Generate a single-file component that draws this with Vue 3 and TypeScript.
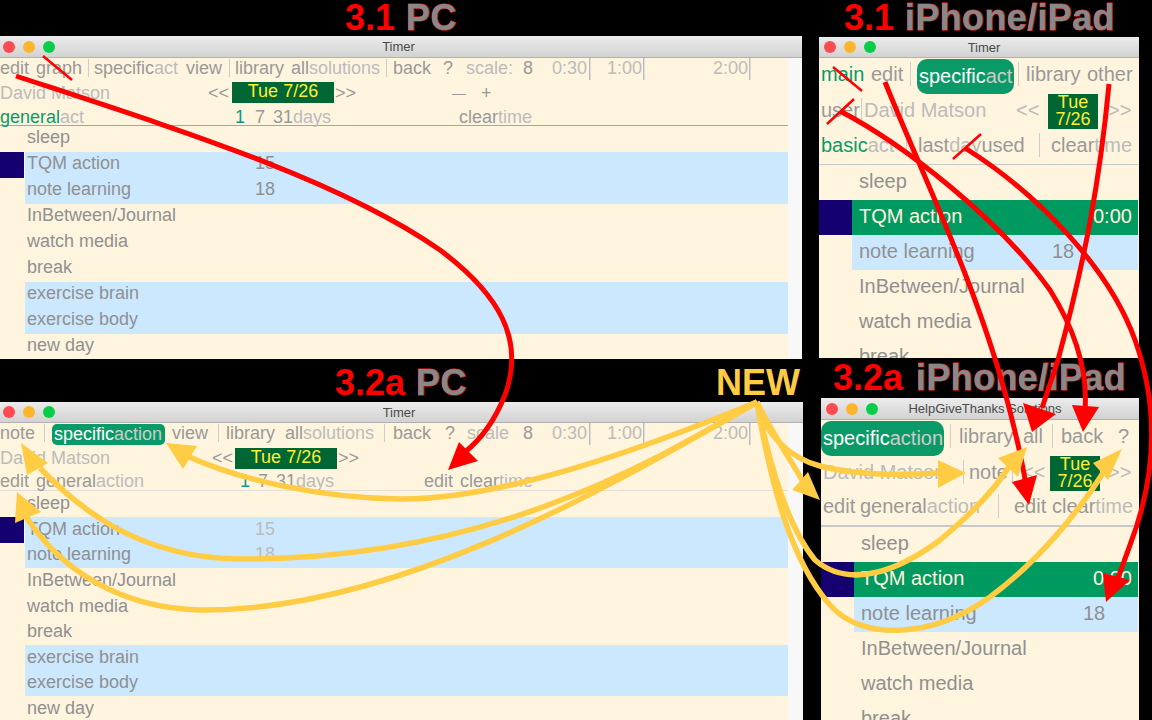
<script setup lang="ts">
type Part = [string, string]
interface Cell {
  x: number
  t?: Part[]
  kind?: "pill" | "date" | "sep" | "tick"
  w?: number
}
interface ListRow {
  label: string
  value?: string
  vx?: number
  tint?: "blue" | "green"
  cls?: string
}
interface Win {
  id: string
  title: string
  textX: number
  tool: { cls: string; cells: Cell[] }[]
  rows: ListRow[]
  strip: boolean
}

const g = (s: string): Part => ["g", s]
const d = (s: string): Part => ["d", s]
const gr = (s: string): Part => ["gr", s]

const names = ["sleep", "TQM action", "note learning", "InBetween/Journal", "watch media", "break"]
const pcRows = (dimValues: boolean): ListRow[] => [
  { label: "sleep" },
  { label: "TQM action", value: "15", vx: 255, tint: "blue", cls: dimValues ? "d" : "" },
  { label: "note learning", value: "18", vx: 255, tint: "blue", cls: dimValues ? "d" : "" },
  { label: names[3] },
  { label: names[4] },
  { label: names[5] },
  { label: "exercise brain", tint: "blue" },
  { label: "exercise body", tint: "blue" },
  { label: "new day" },
]
const phoneRows = (timeX: number, noteX: number): ListRow[] => [
  { label: "sleep" },
  { label: "TQM action", value: "0:00", vx: timeX, tint: "green" },
  { label: "note learning", value: "18", vx: noteX, tint: "blue" },
  { label: names[3] },
  { label: names[4] },
  { label: names[5] },
]

const windows: Win[] = [
  {
    id: "w1",
    title: "Timer",
    textX: 27,
    strip: true,
    rows: pcRows(false),
    tool: [
      {
        cls: "t1",
        cells: [
          { x: 0, t: [g("edit")] },
          { x: 36, t: [g("graph")] },
          { x: 88, kind: "sep" },
          { x: 94, t: [g("specific"), d("act")] },
          { x: 186, t: [g("view")] },
          { x: 229, kind: "sep" },
          { x: 235, t: [g("library")] },
          { x: 291, t: [g("all"), d("solutions")] },
          { x: 386, kind: "sep" },
          { x: 393, t: [g("back")] },
          { x: 443, t: [g("?")] },
          { x: 466, t: [d("scale:")] },
          { x: 523, t: [g("8")] },
          { x: 552, t: [d("0:30")] },
          { x: 589, kind: "tick" },
          { x: 607, t: [d("1:00")] },
          { x: 643, kind: "tick" },
          { x: 713, t: [d("2:00")] },
          { x: 749, kind: "tick" },
        ],
      },
      {
        cls: "t2",
        cells: [
          { x: 0, t: [d("David Matson")] },
          { x: 208, t: [g("<<")] },
          { x: 232, kind: "date", w: 102 },
          { x: 335, t: [g(">>")] },
          { x: 452, t: [["sm", "—"]] },
          { x: 481, t: [g("+")] },
        ],
      },
      {
        cls: "t3",
        cells: [
          { x: 0, t: [gr("general"), d("act")] },
          { x: 235, t: [["te", "1"]] },
          { x: 255, t: [g("7")] },
          { x: 273, t: [g("31"), d("days")] },
          { x: 459, t: [g("clear"), d("time")] },
        ],
      },
    ],
  },
  {
    id: "w2",
    title: "Timer",
    textX: 27,
    strip: true,
    rows: pcRows(true),
    tool: [
      {
        cls: "t1",
        cells: [
          { x: 0, t: [g("note")] },
          { x: 44, kind: "sep" },
          { x: 52, kind: "pill", w: 113, t: [["w", "specific"], ["p", "action"]] },
          { x: 172, t: [g("view")] },
          { x: 218, kind: "sep" },
          { x: 226, t: [g("library")] },
          { x: 285, t: [g("all"), d("solutions")] },
          { x: 384, kind: "sep" },
          { x: 393, t: [g("back")] },
          { x: 445, t: [g("?")] },
          { x: 467, t: [d("scale")] },
          { x: 523, t: [g("8")] },
          { x: 552, t: [d("0:30")] },
          { x: 589, kind: "tick" },
          { x: 607, t: [d("1:00")] },
          { x: 643, kind: "tick" },
          { x: 713, t: [d("2:00")] },
          { x: 749, kind: "tick" },
        ],
      },
      {
        cls: "t2",
        cells: [
          { x: 0, t: [d("David Matson")] },
          { x: 212, t: [g("<<")] },
          { x: 235, kind: "date", w: 102 },
          { x: 338, t: [g(">>")] },
        ],
      },
      {
        cls: "t3",
        cells: [
          { x: 0, t: [g("edit")] },
          { x: 36, t: [g("general"), d("action")] },
          { x: 240, t: [["te", "1"]] },
          { x: 258, t: [g("7")] },
          { x: 276, t: [g("31"), d("days")] },
          { x: 424, t: [g("edit")] },
          { x: 460, t: [g("clear"), d("time")] },
        ],
      },
    ],
  },
  {
    id: "w3",
    title: "Timer",
    textX: 40,
    strip: false,
    rows: phoneRows(274, 233),
    tool: [
      {
        cls: "t1",
        cells: [
          { x: 2, t: [gr("main")] },
          { x: 52, t: [g("edit")] },
          { x: 91, kind: "sep" },
          { x: 98, kind: "pill", w: 97, t: [["w", "specific"], ["p", "act"]] },
          { x: 199, kind: "sep" },
          { x: 207, t: [g("library")] },
          { x: 268, t: [g("other")] },
        ],
      },
      {
        cls: "t2",
        cells: [
          { x: 2, t: [g("user")] },
          { x: 42, kind: "sep" },
          { x: 45, t: [d("David Matson")] },
          { x: 197, t: [d("<<")] },
          { x: 229, kind: "date", w: 50 },
          { x: 289, t: [d(">>")] },
        ],
      },
      {
        cls: "t3",
        cells: [
          { x: 2, t: [gr("basic"), d("act")] },
          { x: 87, kind: "sep" },
          { x: 99, t: [g("last"), d("day"), g("used")] },
          { x: 220, kind: "sep" },
          { x: 232, t: [g("clear"), d("time")] },
        ],
      },
    ],
  },
  {
    id: "w4",
    title: "HelpGiveThanks Solutions",
    textX: 41,
    strip: false,
    rows: phoneRows(273, 263),
    tool: [
      {
        cls: "t1",
        cells: [
          { x: 0, kind: "pill", w: 123, t: [["w", "specific"], ["p", "action"]] },
          { x: 129, kind: "sep" },
          { x: 138, t: [g("library")] },
          { x: 202, t: [g("all")] },
          { x: 231, kind: "sep" },
          { x: 240, t: [g("back")] },
          { x: 297, t: [g("?")] },
        ],
      },
      {
        cls: "t2",
        cells: [
          { x: 2, t: [d("David Matson")] },
          { x: 142, kind: "sep" },
          { x: 148, t: [g("note")] },
          { x: 191, kind: "sep" },
          { x: 201, t: [d("<<")] },
          { x: 229, kind: "date", w: 50 },
          { x: 287, t: [d(">>")] },
        ],
      },
      {
        cls: "t3",
        cells: [
          { x: 2, t: [g("edit")] },
          { x: 39, t: [g("general"), d("action")] },
          { x: 177, kind: "sep" },
          { x: 193, t: [g("edit")] },
          { x: 231, t: [g("clear"), d("time")] },
        ],
      },
    ],
  },
]

// each cell is as wide as the distance to the next one
const cellStyle = (cells: Cell[], i: number) => {
  const c = cells[i]
  const gap = i + 1 < cells.length ? cells[i + 1].x - c.x : 60
  const first = i === 0 ? c.x : 0
  return { width: (c.w ?? gap) + "px", marginRight: gap - (c.w ?? gap) + "px", marginLeft: first + "px" }
}

const redLines = [
  "M16 76 C180 130 340 180 440 250 C500 295 525 340 505 395 C495 420 480 440 465 452",
  "M885 82 C920 170 975 280 1007 400 C1015 430 1022 460 1026 485",
  "M840 111 C905 145 1000 220 1050 290 C1075 330 1088 370 1085 410",
  "M965 148 C1040 195 1110 270 1135 340 C1160 410 1155 480 1130 545 L1118 578",
  "M1109 84 C1100 180 1085 260 1058 360 L1042 408",
]
const redTicks = ["M43 56 L72 80", "M833 67 L862 91", "M854 99 L827 124", "M981 134 L953 159"]
const redHeads = [
  "448,470 459,442 478,461",
  "1029,505 1012,482 1037,475",
  "1083,432 1072,405 1099,407",
  "1106,602 1103,573 1130,580",
  "1032,432 1023,403 1056,414",
]
const yellowLines = [
  "M757 402 C640 450 500 500 400 499 C320 498 240 480 187 456",
  "M757 402 C640 470 480 560 240 559 C140 558 80 510 40 468",
  "M757 402 C620 480 400 612 200 610 C120 608 60 570 25 515",
  "M757 402 C765 435 790 458 820 466 C860 476 900 475 940 473",
  "M757 402 C770 430 785 450 802 480",
  "M757 402 C770 470 790 530 815 560 C850 590 900 570 940 540 C970 515 995 490 1010 465",
  "M757 402 C770 480 790 560 830 605 C860 640 930 640 990 597 C1040 560 1080 510 1105 470",
]
const yellowHeads = [
  "166,443 197,446 183,469",
  "21,443 48,463 27,475",
  "17,492 41,512 15,523",
  "966,473 938,460 938,488",
  "820,500 792,490 808,472",
  "1027,447 998,458 1018,477",
  "1122,449 1093,463 1108,480",
]
</script>

<template>
  <div class="canvas">
    <h2 class="head h1"><span class="red">3.1</span> <span class="grey">PC</span></h2>
    <h2 class="head h2"><span class="red">3.1</span> <span class="grey">iPhone/iPad</span></h2>
    <h2 class="head h3"><span class="red">3.2a</span> <span class="grey">PC</span></h2>
    <h2 class="head h4"><span class="red">3.2a</span> <span class="grey">iPhone/iPad</span></h2>
    <h2 class="head h5">NEW</h2>

    <section v-for="win in windows" :key="win.id" class="win" :class="win.id">
      <header class="bar">
        <div class="lights"><i class="l-r"></i><i class="l-y"></i><i class="l-g"></i></div>
        <div class="title">{{ win.title }}</div>
      </header>
      <div class="content">
        <div class="main">
          <div v-for="row in win.tool" :key="row.cls" class="tool" :class="row.cls">
            <div
              v-for="(c, i) in row.cells"
              :key="c.x"
              class="cell"
              :class="c.kind"
              :style="cellStyle(row.cells, i)"
            >
              <template v-if="c.kind === 'date'">
                <span class="date-part">Tue</span> <span class="date-part">7/26</span>
              </template>
              <template v-else>
                <span v-for="p in c.t" :key="p[1]" :class="p[0]">{{ p[1] }}</span>
              </template>
            </div>
          </div>
          <div
            v-for="r in win.rows"
            :key="r.label"
            class="row"
            :class="[r.tint, { on: r.label === 'TQM action' }]"
          >
            <div class="mark"></div>
            <div class="body">
              <span class="label" :style="r.vx ? { width: r.vx - win.textX + 'px' } : {}">{{ r.label }}</span>
              <span v-if="r.value" :class="r.cls">{{ r.value }}</span>
            </div>
          </div>
        </div>
        <div v-if="win.strip" class="strip"></div>
      </div>
    </section>

    <svg class="ink" width="1152" height="720" viewBox="0 0 1152 720">
      <g fill="none" stroke="#ff0000" stroke-width="5">
        <path v-for="p in redLines" :key="p" :d="p" />
      </g>
      <g fill="none" stroke="#ff0000" stroke-width="2.5">
        <path v-for="p in redTicks" :key="p" :d="p" />
      </g>
      <polygon v-for="p in redHeads" :key="p" :points="p" fill="#ff0000" />
      <g fill="none" stroke="#ffcc44" stroke-width="5.5">
        <path v-for="p in yellowLines" :key="p" :d="p" />
      </g>
      <polygon v-for="p in yellowHeads" :key="p" :points="p" fill="#ffcc44" />
    </svg>
  </div>
</template>

<style>
body {
  margin: 0;
  background: #000;
}
</style>

<style scoped>
.canvas {
  position: relative;
  width: 1152px;
  height: 720px;
  overflow: hidden;
  background: #000;
  font-family: "Liberation Sans", Arial, sans-serif;
}

.head {
  position: absolute;
  margin: 0;
  font-size: 36px;
  line-height: 36px;
  font-weight: 700;
  white-space: nowrap;
}
.h1 { left: 345px; top: 0; }
.h2 { left: 844px; top: 0; }
.h3 { left: 335px; top: 365px; }
.h4 { left: 833px; top: 360px; }
.h5 { left: 716px; top: 365px; color: #ffcc44; }
.red, .grey { display: inline-block; }
.red { color: #ff0000; }
.grey {
  margin-left: 1px;
  letter-spacing: 0.35px;
  color: #888;
  -webkit-text-stroke: 1px #e02020;
  paint-order: stroke fill;
}
.h4 .grey { margin-left: 3px; }

.win {
  position: absolute;
  overflow: hidden;
  background: #fff5df;
  display: flex;
  flex-direction: column;
}
.w1 { left: 0; top: 36px; width: 802px; height: 323px; }
.w2 { left: 0; top: 402px; width: 803px; height: 318px; }
.w3 { left: 819px; top: 37px; width: 320px; height: 321px; }
.w4 { left: 821px; top: 398px; width: 318px; height: 322px; }

.bar {
  flex: none;
  box-sizing: border-box;
  height: 22px;
  display: flex;
  align-items: center;
  background: linear-gradient(#ececec, #d2d2d2);
  border-bottom: 1px solid #b1b1b1;
  font-size: 13px;
  color: #4a4a4a;
}
.w2 .bar, .w3 .bar { height: 21px; }
.w1 .bar, .w2 .bar { padding-right: 63px; }
.w3 .bar, .w4 .bar { padding-right: 50px; }
.lights {
  flex: none;
  width: 58px;
  box-sizing: border-box;
  padding-left: 3px;
  display: flex;
  gap: 8px;
}
.w3 .lights, .w4 .lights {
  width: 60px;
  padding-left: 5px;
}
.lights i {
  width: 12px;
  height: 12px;
  border-radius: 50%;
}
.l-r { background: #fc4c4f; }
.l-y { background: #fdb62c; }
.l-g { background: #07ce48; }
.title {
  flex: 1;
  text-align: center;
}

.content {
  flex: 1;
  display: flex;
  min-height: 0;
}
.main {
  flex: 1;
  min-width: 0;
}
.strip {
  flex: none;
  width: 14px;
  background: #f8f8f8;
}
.w2 .strip { width: 15px; }

.tool {
  box-sizing: border-box;
  display: flex;
  align-items: center;
  font-size: 18px;
  white-space: nowrap;
}
.w3 .tool, .w4 .tool { font-size: 20px; }
.w1 .t1, .w2 .t1 { height: 22px; }
.w1 .t2 { height: 25px; }
.w1 .t3 { height: 21px; border-bottom: 1px solid #a8a49c; }
.w2 .t2 { height: 25px; }
.w2 .t3 { height: 21.4px; border-bottom: 1px solid #e2dfd6; }
.w3 .t1, .w4 .t1 { height: 36px; }
.w3 .t2, .w4 .t2 { height: 35px; }
.w3 .t3 { height: 36px; border-bottom: 1px solid #c8c8c8; }
.w4 .t3 { height: 36px; border-bottom: 2px solid #c8c8c8; }

.cell {
  flex: none;
  line-height: 20px;
}
/* the text sits a little above the middle of each bar */
.w1 .t1 .cell, .w2 .t1 .cell { margin-top: -2px; }
.w1 .t3 .cell { margin-top: 3px; }
.w2 .t3 .cell { margin-top: 2px; }
.w3 .tool .cell, .w4 .tool .cell { margin-top: -4px; }
.g { color: #999; }
.d { color: #bbb; }
.gr { color: #0a9a68; }
.te { color: #0a9a88; }
.w { color: #fff; }
.p { color: #ccc; }
.sm { color: #999; font-size: 14px; }

.sep::before {
  content: "";
  display: block;
  width: 1px;
  height: 18px;
  background: #ccc;
}
.w3 .sep::before, .w4 .sep::before { height: 24px; }
.w1 .t1 .tick, .w2 .t1 .tick {
  align-self: stretch;
  margin-top: 0;
  line-height: 0;
}
.tick::before {
  content: "";
  display: block;
  width: 1px;
  height: 100%;
  background: #bbb;
  border-right: 1px solid #ddd;
}
.tool .pill {
  box-sizing: border-box;
  padding: 0 0 2px 2px;
  background: #0a9a68;
  border-radius: 10px;
  align-self: flex-start;
  display: flex;
  align-items: center;
}
.w2 .t1 .pill {
  height: 21px;
  margin-top: 1px;
  border-radius: 5px;
}
.w3 .t1 .pill, .w4 .t1 .pill {
  height: 35px;
  margin-top: 1px;
}
.tool .date {
  box-sizing: border-box;
  align-self: flex-start;
  background: #006633;
  color: #ffee33;
  text-align: center;
  font-size: 18px;
}
.w1 .t2 .date {
  height: 21px;
  margin-top: 2px;
  line-height: 18px;
}
.w2 .t2 .date {
  height: 21px;
  margin-top: 3px;
  line-height: 18px;
}
.w3 .t2 .date, .w4 .t2 .date {
  height: 35px;
  margin-top: 0;
  line-height: 17px;
}
.w3 .date-part, .w4 .date-part { display: block; }

.row {
  display: flex;
  height: 26px;
  font-size: 18px;
  color: #909090;
}
.w2 .row { height: 25.6px; }
.w3 .row, .w4 .row { height: 35px; font-size: 20px; }
.mark {
  flex: none;
  width: 25px;
}
.w3 .mark, .w4 .mark { width: 33px; }
.on .mark { background: #14006e; }
.w1 .on .mark, .w2 .on .mark {
  width: 24px;
  margin-right: 1px;
}
.body {
  box-sizing: border-box;
  flex: 1;
  display: flex;
  align-items: center;
  padding: 0 0 4px 2px;
}
.w2 .body { padding-bottom: 1px; }
.w3 .body, .w4 .body { padding: 0 0 3px 7px; margin-right: 1px; }
.label {
  flex: none;
  white-space: nowrap;
}
.blue .body { background: #cce8ff; }
.green .body { background: #009960; color: #fff5df; }

.ink {
  position: absolute;
  left: 0;
  top: 0;
  pointer-events: none;
}
</style>
